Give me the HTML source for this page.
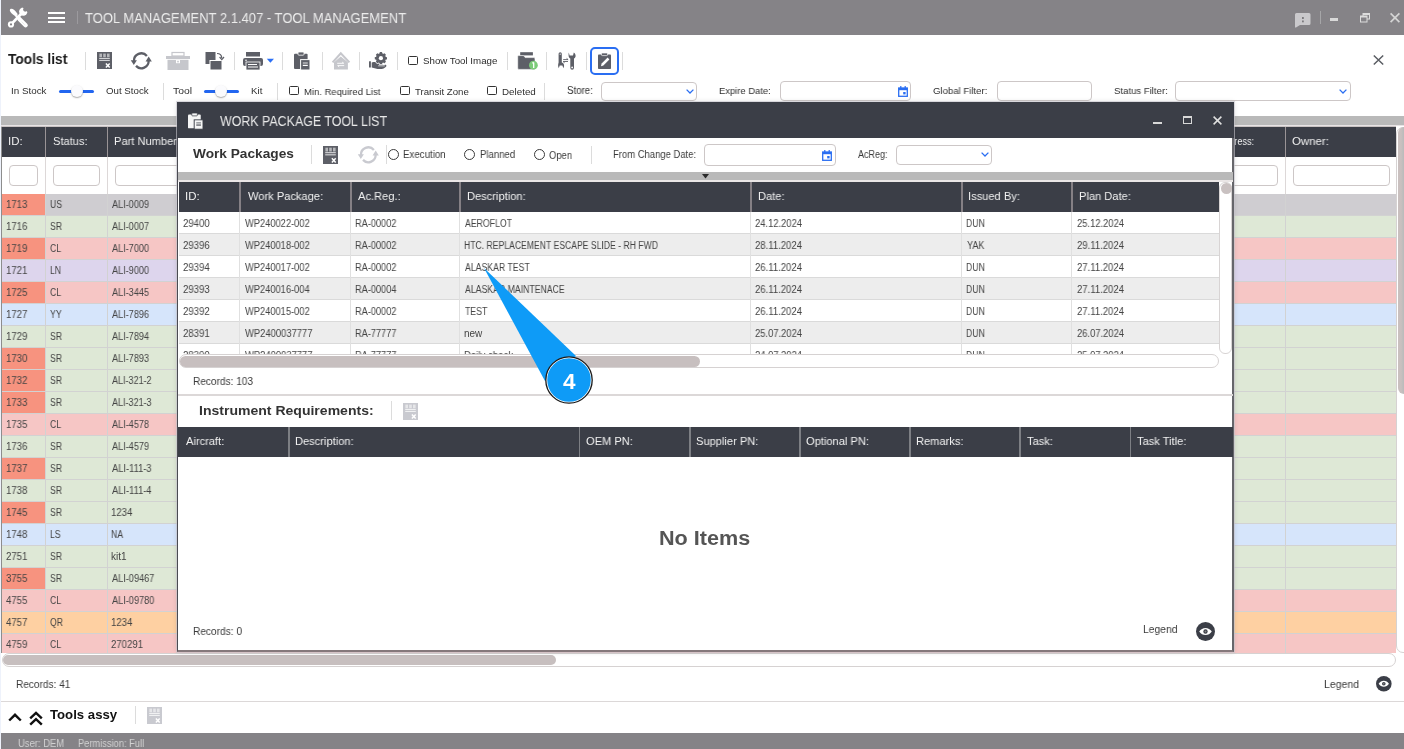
<!DOCTYPE html><html><head><meta charset="utf-8"><style>
*{margin:0;padding:0;box-sizing:border-box}
html,body{width:1404px;height:749px;overflow:hidden;background:#fff;font-family:"Liberation Sans",sans-serif}
.t{position:absolute;white-space:nowrap;line-height:1;will-change:transform}
.a{position:absolute}
svg{position:absolute;overflow:visible}
</style></head><body>
<div style="position:absolute;left:0px;top:0px;width:1px;height:749px;background:#eef2fb"></div>
<div style="position:absolute;left:1px;top:0px;width:1403px;height:35px;background:#858387"></div>
<svg style="left:0;top:0" width="34" height="34" viewBox="0 0 34 34">
<path d="M10.2 9.2 C11.8 7.9 14.6 9.6 17.8 14.2 L15.6 16.4 C11 13.2 8.9 10.6 10.2 9.2 Z" fill="#fff"/>
<path d="M16 15.6 L19.5 19.1" stroke="#fff" stroke-width="2.2"/>
<path d="M19.6 19.2 L25.6 25.2" stroke="#fff" stroke-width="4.4" stroke-linecap="round"/>
<path d="M21.6 21.6 L24.6 24.6" stroke="#e4e4e4" stroke-width="0.8"/>
<path d="M21.5 13.5 L11.8 23.6" stroke="#fff" stroke-width="2.8"/>
<circle cx="11" cy="24.4" r="3.1" fill="#fff"/>
<circle cx="11" cy="24.4" r="1.1" fill="#858387"/>
<circle cx="23.3" cy="11.6" r="4.2" fill="#fff"/>
<circle cx="25.2" cy="9.6" r="2.1" fill="#858387"/>
<path d="M25.2 9.6 L29 5.8 L24.6 5 L22.5 7.3 Z" fill="#858387"/>
<path d="M25.2 9.6 L29 5.8 L30 10 L27.5 12.2 Z" fill="#858387"/>
</svg>
<div style="position:absolute;left:48px;top:12px;width:17px;height:2px;background:#fff"></div>
<div style="position:absolute;left:48px;top:17px;width:17px;height:2px;background:#fff"></div>
<div style="position:absolute;left:48px;top:21px;width:17px;height:2px;background:#fff"></div>
<div style="position:absolute;left:77px;top:11px;width:1px;height:13px;background:#9c9a9e"></div>
<div class="t" style="left:84.77px;top:10.75px;font-size:14.000px;color:#ececec;font-weight:400;transform:scaleX(0.9289);transform-origin:0 0;">TOOL MANAGEMENT 2.1.407 - TOOL MANAGEMENT</div>
<svg style="left:1295px;top:13px" width="16" height="15" viewBox="0 0 16 15">
<path d="M1.5 0 H14 A1.5 1.5 0 0 1 15.5 1.5 V10.5 A1.5 1.5 0 0 1 14 12 H5 L1 14.5 L0 14.5 V1.5 A1.5 1.5 0 0 1 1.5 0Z" fill="#cac9cc"/>
<rect x="7" y="4" width="1.8" height="2" fill="#7c7a7e"/><rect x="7" y="7.5" width="1.8" height="1.8" fill="#7c7a7e"/>
</svg>
<div style="position:absolute;left:1319.5px;top:10.6px;width:1px;height:13.2px;background:#a6a6a8"></div>
<div style="position:absolute;left:1330.2px;top:18.2px;width:8.1px;height:2.8px;background:#d9d9d9"></div>
<svg style="left:1360px;top:13px" width="10" height="10" viewBox="0 0 10 10">
<rect x="3" y="0.5" width="6.5" height="5.5" fill="none" stroke="#dcdcdc" stroke-width="1"/>
<rect x="0.5" y="3" width="6.5" height="6" fill="#858387" stroke="#dcdcdc" stroke-width="1"/>
<rect x="0.5" y="3" width="6.5" height="1.5" fill="#dcdcdc"/><rect x="3" y="0.5" width="6.5" height="1.5" fill="#dcdcdc"/>
</svg>
<svg style="left:1390px;top:13px" width="10" height="10" viewBox="0 0 10 10">
<path d="M0.6 0.4 L9.4 9.2 M9.4 0.4 L0.6 9.2" stroke="#d4d4d4" stroke-width="1.7"/></svg>
<div class="t" style="left:7.86px;top:52.29px;font-size:14.069px;color:#1b1b1b;font-weight:700;transform:scaleX(0.9775);transform-origin:0 0;">Tools list</div>
<div style="position:absolute;left:85px;top:52px;width:1px;height:18px;background:#dcdcdc"></div>
<div style="position:absolute;left:234px;top:52px;width:1px;height:18px;background:#dcdcdc"></div>
<div style="position:absolute;left:282px;top:52px;width:1px;height:18px;background:#dcdcdc"></div>
<div style="position:absolute;left:322px;top:52px;width:1px;height:18px;background:#dcdcdc"></div>
<div style="position:absolute;left:359px;top:52px;width:1px;height:18px;background:#dcdcdc"></div>
<div style="position:absolute;left:397px;top:52px;width:1px;height:18px;background:#dcdcdc"></div>
<div style="position:absolute;left:507px;top:52px;width:1px;height:18px;background:#dcdcdc"></div>
<div style="position:absolute;left:546px;top:52px;width:1px;height:18px;background:#dcdcdc"></div>
<div style="position:absolute;left:586px;top:52px;width:1px;height:18px;background:#dcdcdc"></div>
<div style="position:absolute;left:622px;top:52px;width:1px;height:18px;background:#dcdcdc"></div>
<svg style="left:97px;top:52px" width="15" height="17" viewBox="0 0 15 17" preserveAspectRatio="none">
<rect x="0" y="0" width="15" height="17" fill="#5d5f67"/>
<g fill="#fff" opacity="0.55"><rect x="2.4" y="1.6" width="2.6" height="3.6"/><rect x="6.2" y="1.6" width="2.6" height="3.6"/><rect x="10" y="1.6" width="2.6" height="3.6"/></g>
<g fill="#fff" opacity="0.9"><rect x="2.2" y="5.9" width="10.6" height="0.9"/><rect x="2.2" y="7.9" width="10.6" height="0.9"/></g>
<path d="M8.9 11.6 L12.7 15.6 M12.7 11.6 L8.9 15.6" stroke="#fff" stroke-width="1.5"/>
</svg>
<svg style="left:131px;top:52px" width="20" height="18" viewBox="0 0 20 18">
<path d="M3 9.2 A7.3 7.3 0 0 1 15.9 4" fill="none" stroke="#5d5f67" stroke-width="2.3"/>
<path d="M17.6 8.4 A7.3 7.3 0 0 1 5 13.9" fill="none" stroke="#5d5f67" stroke-width="2.3"/>
<path d="M14.6 9.4 L20.8 9.4 L17.7 4.6 Z" fill="#5d5f67"/>
<path d="M-0.2 8.3 L5.9 8.3 L2.8 13 Z" fill="#5d5f67"/>
</svg>
<svg style="left:166px;top:52px" width="24" height="18" viewBox="0 0 24 18">
<rect x="6" y="0.5" width="12" height="3.5" fill="none" stroke="#c6c7cc" stroke-width="1.2"/>
<rect x="0" y="4" width="24" height="3" fill="#c6c7cc"/>
<rect x="1.5" y="7.8" width="21" height="10.2" fill="#c6c7cc"/>
<rect x="10" y="8" width="4" height="3.2" fill="#fff"/><rect x="11.2" y="8.8" width="1.6" height="1.6" fill="#c6c7cc"/>
</svg>
<svg style="left:205px;top:52px" width="20" height="18" viewBox="0 0 20 18">
<rect x="0.5" y="0" width="10" height="12" fill="#5d5f67"/>
<rect x="5" y="8.5" width="12" height="9.5" fill="#5d5f67" stroke="#fff" stroke-width="1"/>
<path d="M12 1.5 Q16.5 1.5 16.8 6" fill="none" stroke="#5d5f67" stroke-width="1.2"/>
<path d="M14.6 5 L16.8 7.6 L19 5" fill="none" stroke="#5d5f67" stroke-width="1.2"/>
</svg>
<svg style="left:243px;top:52px" width="32" height="18" viewBox="0 0 32 18">
<rect x="3" y="0" width="14" height="4.5" fill="#5d5f67"/>
<rect x="0" y="6" width="20" height="8" rx="2" fill="#5d5f67"/>
<rect x="3" y="10" width="14" height="8" fill="#5d5f67" stroke="#fff" stroke-width="0.8"/>
<rect x="5" y="12" width="9" height="1" fill="#fff"/><rect x="5" y="14.5" width="10" height="1" fill="#fff"/>
<circle cx="3" cy="8.3" r="0.8" fill="#fff"/>
<path d="M23.8 6.8 L31 6.8 L27.4 10.8 Z" fill="#2b6ff5"/>
</svg>
<svg style="left:294px;top:52px" width="16" height="18" viewBox="0 0 16 18" preserveAspectRatio="none">
<rect x="0" y="1.8" width="13.6" height="15.2" rx="1" fill="#5d5f67"/>
<rect x="4" y="0" width="6" height="3.2" rx="0.9" fill="#5d5f67" stroke="#fff" stroke-width="0.8"/>
<rect x="6.6" y="7.6" width="9.4" height="10.4" fill="#5d5f67" stroke="#fff" stroke-width="1"/>
<rect x="8.8" y="10.4" width="5" height="1.2" fill="#fff" opacity="0.7"/><rect x="8.8" y="12.8" width="5" height="1.2" fill="#fff"/>
</svg>
<svg style="left:328px;top:48px" width="64" height="26" viewBox="328 48 64 26">
<path d="M332.6 62.4 L340.8 53.3 L349.4 62.4" fill="none" stroke="#c6c7cc" stroke-width="2.1" stroke-linejoin="miter"/>
<path d="M334 62.2 L340.8 56.4 L347.9 62.2 V69.4 H334 Z" fill="#c6c7cc"/>
<path d="M337.2 63.3 H343.6 M342.2 62.1 L343.8 63.3 M344.2 65.6 H337.8 M339.2 66.8 L337.6 65.6" stroke="#fff" stroke-width="0.9" fill="none"/>
<rect x="369" y="61.2" width="1.9" height="6.4" rx="0.3" fill="#5d5f67"/>
<path d="M371.7 62.4 C374 61.8 377.5 61.9 380 62.4 L382.2 62.8 C383.4 63.1 383.4 64.6 382 64.7 L378.5 64.8 L384.6 64.9 C385.8 64.6 386.9 65.4 386.2 66.4 C385 68 382.4 69.2 379.4 69.1 C377 69 374.2 68.1 371.7 67.5 Z" fill="#5d5f67"/>
<path d="M378.2 65.8 L384.8 65.9" stroke="#fff" stroke-width="0.7"/>
<g transform="translate(380.9,58.2)" fill="#fff" stroke="#fff" stroke-width="1.4"><rect x="-1.3" y="-6.1" width="2.6" height="2.6" rx="0.6" transform="rotate(0)"/><rect x="-1.3" y="-6.1" width="2.6" height="2.6" rx="0.6" transform="rotate(45)"/><rect x="-1.3" y="-6.1" width="2.6" height="2.6" rx="0.6" transform="rotate(90)"/><rect x="-1.3" y="-6.1" width="2.6" height="2.6" rx="0.6" transform="rotate(135)"/><rect x="-1.3" y="-6.1" width="2.6" height="2.6" rx="0.6" transform="rotate(180)"/><rect x="-1.3" y="-6.1" width="2.6" height="2.6" rx="0.6" transform="rotate(225)"/><rect x="-1.3" y="-6.1" width="2.6" height="2.6" rx="0.6" transform="rotate(270)"/><rect x="-1.3" y="-6.1" width="2.6" height="2.6" rx="0.6" transform="rotate(315)"/><circle r="5"/></g>
<g transform="translate(380.9,58.2)" fill="#5d5f67"><rect x="-1.3" y="-6.1" width="2.6" height="2.6" rx="0.6" transform="rotate(0)"/><rect x="-1.3" y="-6.1" width="2.6" height="2.6" rx="0.6" transform="rotate(45)"/><rect x="-1.3" y="-6.1" width="2.6" height="2.6" rx="0.6" transform="rotate(90)"/><rect x="-1.3" y="-6.1" width="2.6" height="2.6" rx="0.6" transform="rotate(135)"/><rect x="-1.3" y="-6.1" width="2.6" height="2.6" rx="0.6" transform="rotate(180)"/><rect x="-1.3" y="-6.1" width="2.6" height="2.6" rx="0.6" transform="rotate(225)"/><rect x="-1.3" y="-6.1" width="2.6" height="2.6" rx="0.6" transform="rotate(270)"/><rect x="-1.3" y="-6.1" width="2.6" height="2.6" rx="0.6" transform="rotate(315)"/><circle r="5"/></g>
<circle cx="380.9" cy="58.2" r="2.1" fill="#fff"/>
</svg>
<div class="a" style="left:408px;top:56px;width:10px;height:9px;border:1.5px solid #333;border-radius:1.5px"></div>
<div class="t" style="left:423.16px;top:55.84px;font-size:9.517px;color:#2b2b2b;font-weight:400;transform:scaleX(1.0229);transform-origin:0 0;">Show Tool Image</div>
<svg style="left:515px;top:50px" width="65" height="22" viewBox="515 50 65 22">
<rect x="520.2" y="52.2" width="12.7" height="3.2" fill="#5d5f67"/>
<path d="M518.6 55.6 H523.6 L525.2 57.6 H533.8 A1.2 1.2 0 0 1 535 58.8 V68.2 A1.2 1.2 0 0 1 533.8 69.4 H518.9 A1.2 1.2 0 0 1 517.7 68.2 V56.6 A1 1 0 0 1 518.6 55.6 Z" fill="#5d5f67" stroke="#fff" stroke-width="0.6"/>
<circle cx="533.4" cy="65.2" r="4.4" fill="#7ccb79"/>
<path d="M533.7 62.4 V68 M532.4 63.3 L533.7 62.4" stroke="#fff" stroke-width="1.3" fill="none"/>
<path d="M560.2 52.2 A1.6 1.6 0 0 1 561.8 53.8 V62.4 C563.6 62.9 564.4 64.6 564 66.6 L563.4 68.3 L562.4 65.6 H559.7 L558.8 68.3 L558.2 66.6 C557.8 64.6 558.6 62.9 558.6 62.4 V53.8 A1.6 1.6 0 0 1 560.2 52.2 Z" fill="#5d5f67"/>
<circle cx="560.2" cy="54.2" r="0.6" fill="#fff"/>
<path d="M568.8 52.6 L569.6 55.6 H573 L573.8 52.6 C575.6 53.8 576.2 56.2 575 57.8 C574.6 58.3 574.2 58.4 574 58.6 V67.8 A1.85 1.85 0 0 1 570.3 67.8 V58.6 C570 58.4 569.6 58.3 569.3 57.8 C568.2 56.2 568.6 53.8 568.8 52.6 Z" fill="#5d5f67"/>
<circle cx="572.15" cy="67.4" r="0.9" fill="#fff"/>
<path d="M563.2 59.6 H568 M566.6 58.4 L568.2 59.6 M568 61.5 H563.2 M564.6 62.7 L563 61.5" stroke="#5d5f67" stroke-width="0.9" fill="none"/>
</svg>
<div class="a" style="left:589.5px;top:47px;width:29.5px;height:27.5px;border:2px solid #2a6ef2;border-radius:5px"></div>
<svg style="left:598px;top:53px" width="13" height="16" viewBox="0 0 13 16">
<rect x="0" y="1.5" width="13" height="14.5" rx="0.8" fill="#5d5f67"/>
<rect x="3.5" y="0" width="6" height="2.6" rx="0.8" fill="#5d5f67" stroke="#fff" stroke-width="0.7"/>
<path d="M3 13.2 L3.6 10.6 L9.6 4.6 L11.4 6.4 L5.4 12.4 Z" fill="#fff"/>
</svg>
<svg style="left:1373px;top:55px" width="11" height="10" viewBox="0 0 11 10">
<path d="M0.8 0.5 L10.2 9.5 M10.2 0.5 L0.8 9.5" stroke="#5a5d63" stroke-width="1.5"/></svg>
<div class="t" style="left:11.11px;top:85.83px;font-size:9.655px;color:#2f2f2f;font-weight:400;transform:scaleX(1.0196);transform-origin:0 0;">In Stock</div>
<div style="position:absolute;left:59px;top:89.5px;width:35px;height:3px;background:#2266f0;border-radius:1.5px"></div><div class="a" style="left:70.5px;top:85px;width:12px;height:12px;border-radius:6px;background:#fbfbfd;box-shadow:0 1px 1.5px rgba(0,0,0,0.35)"></div>
<div class="t" style="left:106.16px;top:85.83px;font-size:9.655px;color:#2f2f2f;font-weight:400;transform:scaleX(1.0083);transform-origin:0 0;">Out Stock</div>
<div style="position:absolute;left:163px;top:82.5px;width:1px;height:17.5px;background:#dcdcdc"></div>
<div class="t" style="left:172.74px;top:85.83px;font-size:9.655px;color:#2f2f2f;font-weight:400;transform:scaleX(1.0714);transform-origin:0 0;">Tool</div>
<div style="position:absolute;left:204px;top:89.5px;width:34.5px;height:3px;background:#2266f0;border-radius:1.5px"></div><div class="a" style="left:215px;top:85px;width:12px;height:12px;border-radius:6px;background:#fbfbfd;box-shadow:0 1px 1.5px rgba(0,0,0,0.35)"></div>
<div class="t" style="left:250.72px;top:85.83px;font-size:9.655px;color:#2f2f2f;font-weight:400;transform:scaleX(1.0069);transform-origin:0 0;">Kit</div>
<div style="position:absolute;left:277px;top:82.5px;width:1px;height:17.5px;background:#dcdcdc"></div>
<div class="a" style="left:288.5px;top:86.3px;width:10px;height:9px;border:1.5px solid #333;border-radius:1.5px"></div>
<div class="t" style="left:303.64px;top:86.83px;font-size:9.655px;color:#2f2f2f;font-weight:400;transform:scaleX(0.9824);transform-origin:0 0;">Min. Required List</div>
<div class="a" style="left:399.7px;top:86.3px;width:10px;height:9px;border:1.5px solid #333;border-radius:1.5px"></div>
<div class="t" style="left:414.76px;top:86.83px;font-size:9.655px;color:#2f2f2f;font-weight:400;transform:scaleX(0.9915);transform-origin:0 0;">Transit Zone</div>
<div class="a" style="left:487px;top:86.3px;width:10px;height:9px;border:1.5px solid #333;border-radius:1.5px"></div>
<div class="t" style="left:501.81px;top:86.83px;font-size:9.655px;color:#2f2f2f;font-weight:400;transform:scaleX(1.0169);transform-origin:0 0;">Deleted</div>
<div style="position:absolute;left:544px;top:82.5px;width:1px;height:17.5px;background:#dcdcdc"></div>
<div class="t" style="left:566.86px;top:85.63px;font-size:10.000px;color:#2f2f2f;font-weight:400;transform:scaleX(0.9684);transform-origin:0 0;">Store:</div>
<div class="a" style="left:601px;top:81.5px;width:96px;height:19px;border:1px solid #cdc7c7;border-radius:4px;background:#fff"></div>
<svg style="left:686px;top:88.5px" width="8" height="5" viewBox="0 0 8 5"><path d="M0.6 0.6 L4 4 L7.4 0.6" fill="none" stroke="#2a6ef2" stroke-width="1.3"/></svg>
<div class="t" style="left:719.15px;top:85.61px;font-size:9.793px;color:#2f2f2f;font-weight:400;transform:scaleX(0.9617);transform-origin:0 0;">Expire Date:</div>
<div class="a" style="left:779.5px;top:80.5px;width:131.5px;height:20.5px;border:1px solid #cdc7c7;border-radius:4px;background:#fff"></div>
<svg style="left:898px;top:86px" width="10" height="11" viewBox="0 0 10 11">
<rect x="0.7" y="2" width="8.6" height="8.3" fill="none" stroke="#2a6ef2" stroke-width="1.3"/>
<rect x="0.7" y="2" width="8.6" height="2.2" fill="#2a6ef2"/>
<rect x="2.2" y="0" width="1.2" height="2.2" fill="#2a6ef2"/><rect x="6.6" y="0" width="1.2" height="2.2" fill="#2a6ef2"/>
<rect x="5.2" y="6" width="2.4" height="2.4" fill="#2a6ef2"/></svg>
<div class="t" style="left:932.82px;top:85.61px;font-size:9.793px;color:#2f2f2f;font-weight:400;transform:scaleX(0.9795);transform-origin:0 0;">Global Filter:</div>
<div class="a" style="left:996.5px;top:80.5px;width:95.5px;height:20.5px;border:1px solid #cdc7c7;border-radius:4px;background:#fff"></div>
<div class="t" style="left:1114.07px;top:85.61px;font-size:9.793px;color:#2f2f2f;font-weight:400;transform:scaleX(0.9792);transform-origin:0 0;">Status Filter:</div>
<div class="a" style="left:1174.5px;top:81px;width:176px;height:20px;border:1px solid #cdc7c7;border-radius:4px;background:#fff"></div>
<svg style="left:1339px;top:88.5px" width="8" height="5" viewBox="0 0 8 5"><path d="M0.6 0.6 L4 4 L7.4 0.6" fill="none" stroke="#2a6ef2" stroke-width="1.3"/></svg>
<div style="position:absolute;left:1px;top:116px;width:1403px;height:9px;background:#b9b9b9"></div>
<div style="position:absolute;left:1px;top:125px;width:1403px;height:1px;background:#e7e3e5"></div>
<div style="position:absolute;left:1px;top:126px;width:1395px;height:1px;background:#c9c3c3"></div>
<div style="position:absolute;left:1px;top:127px;width:1395px;height:30px;background:#3b3e47"></div>
<div style="position:absolute;left:1px;top:127px;width:1px;height:526px;background:#8d8d8d"></div>
<div style="position:absolute;left:45px;top:127px;width:1.2px;height:30px;background:#9a9496"></div>
<div style="position:absolute;left:107px;top:127px;width:1.2px;height:30px;background:#9a9496"></div>
<div style="position:absolute;left:1285px;top:127px;width:1.2px;height:30px;background:#9a9496"></div>
<div class="t" style="left:7.50px;top:135.51px;font-size:11.448px;color:#f0f0f0;font-weight:400;transform:scaleX(0.9711);transform-origin:0 0;">ID:</div>
<div class="t" style="left:52.60px;top:135.51px;font-size:11.448px;color:#f0f0f0;font-weight:400;transform:scaleX(0.9711);transform-origin:0 0;">Status:</div>
<div class="t" style="left:113.91px;top:135.51px;font-size:11.448px;color:#f0f0f0;font-weight:400;transform:scaleX(0.9711);transform-origin:0 0;">Part Number:</div>
<div class="t" style="left:1217.99px;top:135.51px;font-size:11.448px;color:#f0f0f0;font-weight:400;transform:scaleX(0.8000);transform-origin:0 0;">Address:</div>
<div class="t" style="left:1292.18px;top:135.28px;font-size:11.714px;color:#f0f0f0;font-weight:400;transform:scaleX(0.9796);transform-origin:0 0;">Owner:</div>
<div style="position:absolute;left:2px;top:157px;width:1394px;height:37px;background:#fff"></div>
<div style="position:absolute;left:45px;top:157px;width:1px;height:37px;background:#ddd8d8"></div>
<div style="position:absolute;left:107px;top:157px;width:1px;height:37px;background:#ddd8d8"></div>
<div style="position:absolute;left:1285px;top:157px;width:1px;height:37px;background:#ddd8d8"></div>
<div class="a" style="left:9px;top:164.5px;width:29px;height:21.5px;border:1px solid #cdc7c7;border-radius:4px;background:#fff"></div>
<div class="a" style="left:53px;top:164.5px;width:46.5px;height:21.5px;border:1px solid #cdc7c7;border-radius:4px;background:#fff"></div>
<div class="a" style="left:115px;top:164.5px;width:200px;height:21.5px;border:1px solid #cdc7c7;border-radius:4px;background:#fff"></div>
<div class="a" style="left:1200px;top:164.5px;width:78px;height:21.5px;border:1px solid #cdc7c7;border-radius:4px;background:#fff"></div>
<div class="a" style="left:1292.5px;top:164.5px;width:97px;height:21.5px;border:1px solid #cdc7c7;border-radius:4px;background:#fff"></div>
<div style="position:absolute;left:2px;top:194px;width:43px;height:21px;background:#f7937f"></div>
<div style="position:absolute;left:45px;top:194px;width:1351px;height:21px;background:#cfcdd1"></div>
<div style="position:absolute;left:2px;top:215px;width:1394px;height:1px;background:#d2d2d2"></div>
<div style="position:absolute;left:45px;top:194px;width:1px;height:21px;background:#d2d2d2"></div>
<div style="position:absolute;left:107px;top:194px;width:1px;height:21px;background:#d2d2d2"></div>
<div style="position:absolute;left:1285px;top:194px;width:1px;height:21px;background:#d2d2d2"></div>
<div class="t" style="left:5.98px;top:200.03px;font-size:10.000px;color:#444;font-weight:400;transform:scaleX(0.9616);transform-origin:0 0;">1713</div>
<div class="t" style="left:50.05px;top:200.03px;font-size:10.000px;color:#444;font-weight:400;transform:scaleX(0.8679);transform-origin:0 0;">US</div>
<div class="t" style="left:111.75px;top:200.03px;font-size:10.000px;color:#444;font-weight:400;transform:scaleX(0.9118);transform-origin:0 0;">ALI-0009</div>
<div style="position:absolute;left:2px;top:216px;width:43px;height:21px;background:#dee8d6"></div>
<div style="position:absolute;left:45px;top:216px;width:1351px;height:21px;background:#dee8d6"></div>
<div style="position:absolute;left:2px;top:237px;width:1394px;height:1px;background:#d2d2d2"></div>
<div style="position:absolute;left:45px;top:216px;width:1px;height:21px;background:#d2d2d2"></div>
<div style="position:absolute;left:107px;top:216px;width:1px;height:21px;background:#d2d2d2"></div>
<div style="position:absolute;left:1285px;top:216px;width:1px;height:21px;background:#d2d2d2"></div>
<div class="t" style="left:5.98px;top:222.03px;font-size:10.000px;color:#444;font-weight:400;transform:scaleX(0.9616);transform-origin:0 0;">1716</div>
<div class="t" style="left:50.31px;top:222.03px;font-size:10.000px;color:#444;font-weight:400;transform:scaleX(0.8693);transform-origin:0 0;">SR</div>
<div class="t" style="left:111.75px;top:222.03px;font-size:10.000px;color:#444;font-weight:400;transform:scaleX(0.9118);transform-origin:0 0;">ALI-0007</div>
<div style="position:absolute;left:2px;top:238px;width:43px;height:21px;background:#f7937f"></div>
<div style="position:absolute;left:45px;top:238px;width:1351px;height:21px;background:#f6c6c5"></div>
<div style="position:absolute;left:2px;top:259px;width:1394px;height:1px;background:#d2d2d2"></div>
<div style="position:absolute;left:45px;top:238px;width:1px;height:21px;background:#d2d2d2"></div>
<div style="position:absolute;left:107px;top:238px;width:1px;height:21px;background:#d2d2d2"></div>
<div style="position:absolute;left:1285px;top:238px;width:1px;height:21px;background:#d2d2d2"></div>
<div class="t" style="left:5.98px;top:244.03px;font-size:10.000px;color:#444;font-weight:400;transform:scaleX(0.9616);transform-origin:0 0;">1719</div>
<div class="t" style="left:50.27px;top:244.03px;font-size:10.000px;color:#444;font-weight:400;transform:scaleX(0.8695);transform-origin:0 0;">CL</div>
<div class="t" style="left:111.75px;top:244.03px;font-size:10.000px;color:#444;font-weight:400;transform:scaleX(0.9118);transform-origin:0 0;">ALI-7000</div>
<div style="position:absolute;left:2px;top:260px;width:43px;height:21px;background:#ddd5ed"></div>
<div style="position:absolute;left:45px;top:260px;width:1351px;height:21px;background:#ddd5ed"></div>
<div style="position:absolute;left:2px;top:281px;width:1394px;height:1px;background:#d2d2d2"></div>
<div style="position:absolute;left:45px;top:260px;width:1px;height:21px;background:#d2d2d2"></div>
<div style="position:absolute;left:107px;top:260px;width:1px;height:21px;background:#d2d2d2"></div>
<div style="position:absolute;left:1285px;top:260px;width:1px;height:21px;background:#d2d2d2"></div>
<div class="t" style="left:5.98px;top:266.04px;font-size:10.000px;color:#444;font-weight:400;transform:scaleX(0.9617);transform-origin:0 0;">1721</div>
<div class="t" style="left:50.01px;top:266.04px;font-size:10.000px;color:#444;font-weight:400;transform:scaleX(0.8651);transform-origin:0 0;">LN</div>
<div class="t" style="left:111.75px;top:266.04px;font-size:10.000px;color:#444;font-weight:400;transform:scaleX(0.9118);transform-origin:0 0;">ALI-9000</div>
<div style="position:absolute;left:2px;top:282px;width:43px;height:21px;background:#f7937f"></div>
<div style="position:absolute;left:45px;top:282px;width:1351px;height:21px;background:#f6c6c5"></div>
<div style="position:absolute;left:2px;top:303px;width:1394px;height:1px;background:#d2d2d2"></div>
<div style="position:absolute;left:45px;top:282px;width:1px;height:21px;background:#d2d2d2"></div>
<div style="position:absolute;left:107px;top:282px;width:1px;height:21px;background:#d2d2d2"></div>
<div style="position:absolute;left:1285px;top:282px;width:1px;height:21px;background:#d2d2d2"></div>
<div class="t" style="left:5.98px;top:288.04px;font-size:10.000px;color:#444;font-weight:400;transform:scaleX(0.9616);transform-origin:0 0;">1725</div>
<div class="t" style="left:50.27px;top:288.04px;font-size:10.000px;color:#444;font-weight:400;transform:scaleX(0.8695);transform-origin:0 0;">CL</div>
<div class="t" style="left:111.75px;top:288.04px;font-size:10.000px;color:#444;font-weight:400;transform:scaleX(0.9118);transform-origin:0 0;">ALI-3445</div>
<div style="position:absolute;left:2px;top:304px;width:43px;height:21px;background:#d6e5fb"></div>
<div style="position:absolute;left:45px;top:304px;width:1351px;height:21px;background:#d6e5fb"></div>
<div style="position:absolute;left:2px;top:325px;width:1394px;height:1px;background:#d2d2d2"></div>
<div style="position:absolute;left:45px;top:304px;width:1px;height:21px;background:#d2d2d2"></div>
<div style="position:absolute;left:107px;top:304px;width:1px;height:21px;background:#d2d2d2"></div>
<div style="position:absolute;left:1285px;top:304px;width:1px;height:21px;background:#d2d2d2"></div>
<div class="t" style="left:5.98px;top:310.04px;font-size:10.000px;color:#444;font-weight:400;transform:scaleX(0.9617);transform-origin:0 0;">1727</div>
<div class="t" style="left:50.48px;top:310.04px;font-size:10.000px;color:#444;font-weight:400;transform:scaleX(0.8712);transform-origin:0 0;">YY</div>
<div class="t" style="left:111.75px;top:310.04px;font-size:10.000px;color:#444;font-weight:400;transform:scaleX(0.9118);transform-origin:0 0;">ALI-7896</div>
<div style="position:absolute;left:2px;top:326px;width:43px;height:21px;background:#dee8d6"></div>
<div style="position:absolute;left:45px;top:326px;width:1351px;height:21px;background:#dee8d6"></div>
<div style="position:absolute;left:2px;top:347px;width:1394px;height:1px;background:#d2d2d2"></div>
<div style="position:absolute;left:45px;top:326px;width:1px;height:21px;background:#d2d2d2"></div>
<div style="position:absolute;left:107px;top:326px;width:1px;height:21px;background:#d2d2d2"></div>
<div style="position:absolute;left:1285px;top:326px;width:1px;height:21px;background:#d2d2d2"></div>
<div class="t" style="left:5.98px;top:332.04px;font-size:10.000px;color:#444;font-weight:400;transform:scaleX(0.9616);transform-origin:0 0;">1729</div>
<div class="t" style="left:50.31px;top:332.04px;font-size:10.000px;color:#444;font-weight:400;transform:scaleX(0.8693);transform-origin:0 0;">SR</div>
<div class="t" style="left:111.75px;top:332.04px;font-size:10.000px;color:#444;font-weight:400;transform:scaleX(0.9119);transform-origin:0 0;">ALI-7894</div>
<div style="position:absolute;left:2px;top:348px;width:43px;height:21px;background:#f7937f"></div>
<div style="position:absolute;left:45px;top:348px;width:1351px;height:21px;background:#dee8d6"></div>
<div style="position:absolute;left:2px;top:369px;width:1394px;height:1px;background:#d2d2d2"></div>
<div style="position:absolute;left:45px;top:348px;width:1px;height:21px;background:#d2d2d2"></div>
<div style="position:absolute;left:107px;top:348px;width:1px;height:21px;background:#d2d2d2"></div>
<div style="position:absolute;left:1285px;top:348px;width:1px;height:21px;background:#d2d2d2"></div>
<div class="t" style="left:5.98px;top:354.04px;font-size:10.000px;color:#444;font-weight:400;transform:scaleX(0.9616);transform-origin:0 0;">1730</div>
<div class="t" style="left:50.31px;top:354.04px;font-size:10.000px;color:#444;font-weight:400;transform:scaleX(0.8693);transform-origin:0 0;">SR</div>
<div class="t" style="left:111.75px;top:354.04px;font-size:10.000px;color:#444;font-weight:400;transform:scaleX(0.9118);transform-origin:0 0;">ALI-7893</div>
<div style="position:absolute;left:2px;top:370px;width:43px;height:21px;background:#f7937f"></div>
<div style="position:absolute;left:45px;top:370px;width:1351px;height:21px;background:#dee8d6"></div>
<div style="position:absolute;left:2px;top:391px;width:1394px;height:1px;background:#d2d2d2"></div>
<div style="position:absolute;left:45px;top:370px;width:1px;height:21px;background:#d2d2d2"></div>
<div style="position:absolute;left:107px;top:370px;width:1px;height:21px;background:#d2d2d2"></div>
<div style="position:absolute;left:1285px;top:370px;width:1px;height:21px;background:#d2d2d2"></div>
<div class="t" style="left:5.98px;top:376.04px;font-size:10.000px;color:#444;font-weight:400;transform:scaleX(0.9617);transform-origin:0 0;">1732</div>
<div class="t" style="left:50.31px;top:376.04px;font-size:10.000px;color:#444;font-weight:400;transform:scaleX(0.8693);transform-origin:0 0;">SR</div>
<div class="t" style="left:111.75px;top:376.04px;font-size:10.000px;color:#444;font-weight:400;transform:scaleX(0.9005);transform-origin:0 0;">ALI-321-2</div>
<div style="position:absolute;left:2px;top:392px;width:43px;height:21px;background:#f7937f"></div>
<div style="position:absolute;left:45px;top:392px;width:1351px;height:21px;background:#dee8d6"></div>
<div style="position:absolute;left:2px;top:413px;width:1394px;height:1px;background:#d2d2d2"></div>
<div style="position:absolute;left:45px;top:392px;width:1px;height:21px;background:#d2d2d2"></div>
<div style="position:absolute;left:107px;top:392px;width:1px;height:21px;background:#d2d2d2"></div>
<div style="position:absolute;left:1285px;top:392px;width:1px;height:21px;background:#d2d2d2"></div>
<div class="t" style="left:5.98px;top:398.04px;font-size:10.000px;color:#444;font-weight:400;transform:scaleX(0.9616);transform-origin:0 0;">1733</div>
<div class="t" style="left:50.31px;top:398.04px;font-size:10.000px;color:#444;font-weight:400;transform:scaleX(0.8693);transform-origin:0 0;">SR</div>
<div class="t" style="left:111.75px;top:398.04px;font-size:10.000px;color:#444;font-weight:400;transform:scaleX(0.9006);transform-origin:0 0;">ALI-321-3</div>
<div style="position:absolute;left:2px;top:414px;width:43px;height:21px;background:#f6c6c5"></div>
<div style="position:absolute;left:45px;top:414px;width:1351px;height:21px;background:#f6c6c5"></div>
<div style="position:absolute;left:2px;top:435px;width:1394px;height:1px;background:#d2d2d2"></div>
<div style="position:absolute;left:45px;top:414px;width:1px;height:21px;background:#d2d2d2"></div>
<div style="position:absolute;left:107px;top:414px;width:1px;height:21px;background:#d2d2d2"></div>
<div style="position:absolute;left:1285px;top:414px;width:1px;height:21px;background:#d2d2d2"></div>
<div class="t" style="left:5.98px;top:420.04px;font-size:10.000px;color:#444;font-weight:400;transform:scaleX(0.9616);transform-origin:0 0;">1735</div>
<div class="t" style="left:50.27px;top:420.04px;font-size:10.000px;color:#444;font-weight:400;transform:scaleX(0.8695);transform-origin:0 0;">CL</div>
<div class="t" style="left:111.75px;top:420.04px;font-size:10.000px;color:#444;font-weight:400;transform:scaleX(0.9118);transform-origin:0 0;">ALI-4578</div>
<div style="position:absolute;left:2px;top:436px;width:43px;height:21px;background:#dee8d6"></div>
<div style="position:absolute;left:45px;top:436px;width:1351px;height:21px;background:#dee8d6"></div>
<div style="position:absolute;left:2px;top:457px;width:1394px;height:1px;background:#d2d2d2"></div>
<div style="position:absolute;left:45px;top:436px;width:1px;height:21px;background:#d2d2d2"></div>
<div style="position:absolute;left:107px;top:436px;width:1px;height:21px;background:#d2d2d2"></div>
<div style="position:absolute;left:1285px;top:436px;width:1px;height:21px;background:#d2d2d2"></div>
<div class="t" style="left:5.98px;top:442.04px;font-size:10.000px;color:#444;font-weight:400;transform:scaleX(0.9616);transform-origin:0 0;">1736</div>
<div class="t" style="left:50.31px;top:442.04px;font-size:10.000px;color:#444;font-weight:400;transform:scaleX(0.8693);transform-origin:0 0;">SR</div>
<div class="t" style="left:111.75px;top:442.04px;font-size:10.000px;color:#444;font-weight:400;transform:scaleX(0.9118);transform-origin:0 0;">ALI-4579</div>
<div style="position:absolute;left:2px;top:458px;width:43px;height:21px;background:#f7937f"></div>
<div style="position:absolute;left:45px;top:458px;width:1351px;height:21px;background:#dee8d6"></div>
<div style="position:absolute;left:2px;top:479px;width:1394px;height:1px;background:#d2d2d2"></div>
<div style="position:absolute;left:45px;top:458px;width:1px;height:21px;background:#d2d2d2"></div>
<div style="position:absolute;left:107px;top:458px;width:1px;height:21px;background:#d2d2d2"></div>
<div style="position:absolute;left:1285px;top:458px;width:1px;height:21px;background:#d2d2d2"></div>
<div class="t" style="left:5.98px;top:464.04px;font-size:10.000px;color:#444;font-weight:400;transform:scaleX(0.9617);transform-origin:0 0;">1737</div>
<div class="t" style="left:50.31px;top:464.04px;font-size:10.000px;color:#444;font-weight:400;transform:scaleX(0.8693);transform-origin:0 0;">SR</div>
<div class="t" style="left:111.75px;top:464.04px;font-size:10.000px;color:#444;font-weight:400;transform:scaleX(0.9325);transform-origin:0 0;">ALI-111-3</div>
<div style="position:absolute;left:2px;top:480px;width:43px;height:21px;background:#dee8d6"></div>
<div style="position:absolute;left:45px;top:480px;width:1351px;height:21px;background:#dee8d6"></div>
<div style="position:absolute;left:2px;top:501px;width:1394px;height:1px;background:#d2d2d2"></div>
<div style="position:absolute;left:45px;top:480px;width:1px;height:21px;background:#d2d2d2"></div>
<div style="position:absolute;left:107px;top:480px;width:1px;height:21px;background:#d2d2d2"></div>
<div style="position:absolute;left:1285px;top:480px;width:1px;height:21px;background:#d2d2d2"></div>
<div class="t" style="left:5.98px;top:486.04px;font-size:10.000px;color:#444;font-weight:400;transform:scaleX(0.9616);transform-origin:0 0;">1738</div>
<div class="t" style="left:50.31px;top:486.04px;font-size:10.000px;color:#444;font-weight:400;transform:scaleX(0.8693);transform-origin:0 0;">SR</div>
<div class="t" style="left:111.75px;top:486.04px;font-size:10.000px;color:#444;font-weight:400;transform:scaleX(0.9325);transform-origin:0 0;">ALI-111-4</div>
<div style="position:absolute;left:2px;top:502px;width:43px;height:21px;background:#f7937f"></div>
<div style="position:absolute;left:45px;top:502px;width:1351px;height:21px;background:#dee8d6"></div>
<div style="position:absolute;left:2px;top:523px;width:1394px;height:1px;background:#d2d2d2"></div>
<div style="position:absolute;left:45px;top:502px;width:1px;height:21px;background:#d2d2d2"></div>
<div style="position:absolute;left:107px;top:502px;width:1px;height:21px;background:#d2d2d2"></div>
<div style="position:absolute;left:1285px;top:502px;width:1px;height:21px;background:#d2d2d2"></div>
<div class="t" style="left:5.98px;top:508.04px;font-size:10.000px;color:#444;font-weight:400;transform:scaleX(0.9616);transform-origin:0 0;">1745</div>
<div class="t" style="left:50.31px;top:508.04px;font-size:10.000px;color:#444;font-weight:400;transform:scaleX(0.8693);transform-origin:0 0;">SR</div>
<div class="t" style="left:111.08px;top:508.04px;font-size:10.000px;color:#444;font-weight:400;transform:scaleX(0.9614);transform-origin:0 0;">1234</div>
<div style="position:absolute;left:2px;top:524px;width:43px;height:21px;background:#d6e5fb"></div>
<div style="position:absolute;left:45px;top:524px;width:1351px;height:21px;background:#d6e5fb"></div>
<div style="position:absolute;left:2px;top:545px;width:1394px;height:1px;background:#d2d2d2"></div>
<div style="position:absolute;left:45px;top:524px;width:1px;height:21px;background:#d2d2d2"></div>
<div style="position:absolute;left:107px;top:524px;width:1px;height:21px;background:#d2d2d2"></div>
<div style="position:absolute;left:1285px;top:524px;width:1px;height:21px;background:#d2d2d2"></div>
<div class="t" style="left:5.98px;top:530.03px;font-size:10.000px;color:#444;font-weight:400;transform:scaleX(0.9616);transform-origin:0 0;">1748</div>
<div class="t" style="left:50.01px;top:530.03px;font-size:10.000px;color:#444;font-weight:400;transform:scaleX(0.8668);transform-origin:0 0;">LS</div>
<div class="t" style="left:111.10px;top:530.03px;font-size:10.000px;color:#444;font-weight:400;transform:scaleX(0.8698);transform-origin:0 0;">NA</div>
<div style="position:absolute;left:2px;top:546px;width:43px;height:21px;background:#dee8d6"></div>
<div style="position:absolute;left:45px;top:546px;width:1351px;height:21px;background:#dee8d6"></div>
<div style="position:absolute;left:2px;top:567px;width:1394px;height:1px;background:#d2d2d2"></div>
<div style="position:absolute;left:45px;top:546px;width:1px;height:21px;background:#d2d2d2"></div>
<div style="position:absolute;left:107px;top:546px;width:1px;height:21px;background:#d2d2d2"></div>
<div style="position:absolute;left:1285px;top:546px;width:1px;height:21px;background:#d2d2d2"></div>
<div class="t" style="left:6.22px;top:552.03px;font-size:10.000px;color:#444;font-weight:400;transform:scaleX(0.9613);transform-origin:0 0;">2751</div>
<div class="t" style="left:50.31px;top:552.03px;font-size:10.000px;color:#444;font-weight:400;transform:scaleX(0.8693);transform-origin:0 0;">SR</div>
<div class="t" style="left:111.16px;top:552.03px;font-size:10.000px;color:#444;font-weight:400;transform:scaleX(0.9809);transform-origin:0 0;">kit1</div>
<div style="position:absolute;left:2px;top:568px;width:43px;height:21px;background:#f7937f"></div>
<div style="position:absolute;left:45px;top:568px;width:1351px;height:21px;background:#dee8d6"></div>
<div style="position:absolute;left:2px;top:589px;width:1394px;height:1px;background:#d2d2d2"></div>
<div style="position:absolute;left:45px;top:568px;width:1px;height:21px;background:#d2d2d2"></div>
<div style="position:absolute;left:107px;top:568px;width:1px;height:21px;background:#d2d2d2"></div>
<div style="position:absolute;left:1285px;top:568px;width:1px;height:21px;background:#d2d2d2"></div>
<div class="t" style="left:6.32px;top:574.03px;font-size:10.000px;color:#444;font-weight:400;transform:scaleX(0.9610);transform-origin:0 0;">3755</div>
<div class="t" style="left:50.31px;top:574.03px;font-size:10.000px;color:#444;font-weight:400;transform:scaleX(0.8693);transform-origin:0 0;">SR</div>
<div class="t" style="left:111.75px;top:574.03px;font-size:10.000px;color:#444;font-weight:400;transform:scaleX(0.9176);transform-origin:0 0;">ALI-09467</div>
<div style="position:absolute;left:2px;top:590px;width:43px;height:21px;background:#f6c6c5"></div>
<div style="position:absolute;left:45px;top:590px;width:1351px;height:21px;background:#f6c6c5"></div>
<div style="position:absolute;left:2px;top:611px;width:1394px;height:1px;background:#d2d2d2"></div>
<div style="position:absolute;left:45px;top:590px;width:1px;height:21px;background:#d2d2d2"></div>
<div style="position:absolute;left:107px;top:590px;width:1px;height:21px;background:#d2d2d2"></div>
<div style="position:absolute;left:1285px;top:590px;width:1px;height:21px;background:#d2d2d2"></div>
<div class="t" style="left:6.46px;top:596.03px;font-size:10.000px;color:#444;font-weight:400;transform:scaleX(0.9608);transform-origin:0 0;">4755</div>
<div class="t" style="left:50.27px;top:596.03px;font-size:10.000px;color:#444;font-weight:400;transform:scaleX(0.8695);transform-origin:0 0;">CL</div>
<div class="t" style="left:111.75px;top:596.03px;font-size:10.000px;color:#444;font-weight:400;transform:scaleX(0.9177);transform-origin:0 0;">ALI-09780</div>
<div style="position:absolute;left:2px;top:612px;width:43px;height:21px;background:#fed0a2"></div>
<div style="position:absolute;left:45px;top:612px;width:1351px;height:21px;background:#fed0a2"></div>
<div style="position:absolute;left:2px;top:633px;width:1394px;height:1px;background:#d2d2d2"></div>
<div style="position:absolute;left:45px;top:612px;width:1px;height:21px;background:#d2d2d2"></div>
<div style="position:absolute;left:107px;top:612px;width:1px;height:21px;background:#d2d2d2"></div>
<div style="position:absolute;left:1285px;top:612px;width:1px;height:21px;background:#d2d2d2"></div>
<div class="t" style="left:6.46px;top:618.03px;font-size:10.000px;color:#444;font-weight:400;transform:scaleX(0.9610);transform-origin:0 0;">4757</div>
<div class="t" style="left:50.31px;top:618.03px;font-size:10.000px;color:#444;font-weight:400;transform:scaleX(0.8698);transform-origin:0 0;">QR</div>
<div class="t" style="left:111.08px;top:618.03px;font-size:10.000px;color:#444;font-weight:400;transform:scaleX(0.9614);transform-origin:0 0;">1234</div>
<div style="position:absolute;left:2px;top:634px;width:43px;height:19px;background:#f6c6c5"></div>
<div style="position:absolute;left:45px;top:634px;width:1351px;height:19px;background:#f6c6c5"></div>
<div style="position:absolute;left:45px;top:634px;width:1px;height:19px;background:#d2d2d2"></div>
<div style="position:absolute;left:107px;top:634px;width:1px;height:19px;background:#d2d2d2"></div>
<div style="position:absolute;left:1285px;top:634px;width:1px;height:19px;background:#d2d2d2"></div>
<div class="t" style="left:6.46px;top:640.03px;font-size:10.000px;color:#444;font-weight:400;transform:scaleX(0.9609);transform-origin:0 0;">4759</div>
<div class="t" style="left:50.27px;top:640.03px;font-size:10.000px;color:#444;font-weight:400;transform:scaleX(0.8695);transform-origin:0 0;">CL</div>
<div class="t" style="left:111.32px;top:640.03px;font-size:10.000px;color:#444;font-weight:400;transform:scaleX(0.9609);transform-origin:0 0;">270291</div>
<div class="a" style="left:2px;top:653px;width:1394px;height:14px;border:1px solid #d6d2d2;border-radius:7px;background:#fff"></div>
<div class="a" style="left:3px;top:655px;width:552.5px;height:10px;border-radius:5px;background:#c7bfbf"></div>
<div class="a" style="left:1396px;top:126.5px;width:16px;height:526px;border:1px solid #d6d2d2;border-radius:7px;background:#fff"></div>
<div class="a" style="left:1397.5px;top:127px;width:12px;height:266.5px;border-radius:6px;background:linear-gradient(90deg,#c9c0bf 0,#c9c0bf 25%,#bcbcbc 45%)"></div>
<div class="t" style="left:16.39px;top:678.71px;font-size:10.621px;color:#3a3a3a;font-weight:400;transform:scaleX(0.9505);transform-origin:0 0;">Records: 41</div>
<div class="t" style="left:1323.56px;top:679.19px;font-size:10.759px;color:#3a3a3a;font-weight:400;transform:scaleX(0.9761);transform-origin:0 0;">Legend</div>
<svg style="left:1376.2px;top:676.2px" width="15.6" height="15.6" viewBox="-10 -10 20 20">
<circle r="10" fill="#3b3e47"/>
<path d="M-6.6 0 C-3.6 -5 3.6 -5 6.6 0 C3.6 5 -3.6 5 -6.6 0 Z" fill="#fff"/>
<circle r="2.3" fill="#3b3e47"/><circle r="1" fill="#888"/>
</svg>
<div style="position:absolute;left:1px;top:701px;width:1403px;height:1px;background:#dcd8d8"></div>
<svg style="left:8px;top:712px" width="36" height="14" viewBox="0 0 36 14">
<path d="M1.2 8.5 L7 2.8 L12.8 8.5" fill="none" stroke="#111" stroke-width="2.4"/>
<path d="M22.2 6.4 L28 0.9 L33.8 6.4 M22.2 12.6 L28 7.1 L33.8 12.6" fill="none" stroke="#111" stroke-width="2.4"/>
</svg>
<div class="t" style="left:50.07px;top:709.02px;font-size:12.966px;color:#111;font-weight:700;transform:scaleX(1.0172);transform-origin:0 0;">Tools assy</div>
<div style="position:absolute;left:135px;top:706px;width:1px;height:18px;background:#dcdcdc"></div>
<svg style="left:147px;top:707px" width="15" height="17" viewBox="0 0 15 17" preserveAspectRatio="none">
<rect x="0" y="0" width="15" height="17" fill="#c9cad0"/>
<g fill="#fff" opacity="0.55"><rect x="2.4" y="1.6" width="2.6" height="3.6"/><rect x="6.2" y="1.6" width="2.6" height="3.6"/><rect x="10" y="1.6" width="2.6" height="3.6"/></g>
<g fill="#fff" opacity="0.9"><rect x="2.2" y="5.9" width="10.6" height="0.9"/><rect x="2.2" y="7.9" width="10.6" height="0.9"/></g>
<path d="M8.9 11.6 L12.7 15.6 M12.7 11.6 L8.9 15.6" stroke="#fff" stroke-width="1.5"/>
</svg>
<div style="position:absolute;left:1px;top:733px;width:1403px;height:16px;background:#858387"></div>
<div class="t" style="left:17.89px;top:738.57px;font-size:10.200px;color:#d2d2d2;font-weight:400;transform:scaleX(0.9265);transform-origin:0 0;">User: DEM</div>
<div class="t" style="left:77.86px;top:738.57px;font-size:10.200px;color:#d2d2d2;font-weight:400;transform:scaleX(0.9121);transform-origin:0 0;">Permission: Full</div>
<div class="a" style="left:177px;top:102px;width:1057px;height:550px;background:#fff;border:1px solid #4a4b52;border-right:2px solid #66666b;border-bottom:2px solid #85787b;border-top:none;box-shadow:0 0 0 1px rgba(200,198,206,0.6),0 0 5px rgba(0,0,0,0.14)"></div>
<div style="position:absolute;left:177px;top:102px;width:1057px;height:36px;background:#3b3e47"></div>
<svg style="left:188px;top:112.7px" width="15" height="16.2" viewBox="0 0 16 18" preserveAspectRatio="none">
<rect x="0" y="1.8" width="13.6" height="15.2" rx="1" fill="#f6f6f6"/>
<rect x="4" y="0" width="6" height="3.2" rx="0.9" fill="#f6f6f6" stroke="#3b3e47" stroke-width="0.8"/>
<rect x="6.6" y="7.6" width="9.4" height="10.4" fill="#f6f6f6" stroke="#3b3e47" stroke-width="1"/>
<rect x="8.8" y="10.4" width="5" height="1.2" fill="#3b3e47" opacity="0.7"/><rect x="8.8" y="12.8" width="5" height="1.2" fill="#3b3e47"/>
</svg>
<div class="t" style="left:219.94px;top:113.91px;font-size:14.286px;color:#e9e9e9;font-weight:400;transform:scaleX(0.8698);transform-origin:0 0;">WORK PACKAGE TOOL LIST</div>
<div style="position:absolute;left:1153px;top:121.5px;width:8.5px;height:2.2px;background:#d8d8d8"></div>
<div class="a" style="left:1183px;top:116px;width:8.5px;height:8px;border:1px solid #d8d8d8;border-top-width:2px"></div>
<svg style="left:1213px;top:116px" width="9" height="9" viewBox="0 0 9 9">
<path d="M0.6 0.6 L8.4 8.4 M8.4 0.6 L0.6 8.4" stroke="#e0e0e0" stroke-width="1.5"/></svg>
<div class="t" style="left:192.50px;top:147.82px;font-size:12.966px;color:#333;font-weight:700;transform:scaleX(1.0557);transform-origin:0 0;">Work Packages</div>
<div style="position:absolute;left:311px;top:145px;width:1px;height:19px;background:#dcdcdc"></div>
<svg style="left:323px;top:146px" width="15" height="18" viewBox="0 0 15 17" preserveAspectRatio="none">
<rect x="0" y="0" width="15" height="17" fill="#5d5f67"/>
<g fill="#fff" opacity="0.55"><rect x="2.4" y="1.6" width="2.6" height="3.6"/><rect x="6.2" y="1.6" width="2.6" height="3.6"/><rect x="10" y="1.6" width="2.6" height="3.6"/></g>
<g fill="#fff" opacity="0.9"><rect x="2.2" y="5.9" width="10.6" height="0.9"/><rect x="2.2" y="7.9" width="10.6" height="0.9"/></g>
<path d="M8.9 11.6 L12.7 15.6 M12.7 11.6 L8.9 15.6" stroke="#fff" stroke-width="1.5"/>
</svg>
<svg style="left:357.5px;top:146px" width="20" height="18" viewBox="0 0 20 18">
<path d="M3 9.2 A7.3 7.3 0 0 1 15.9 4" fill="none" stroke="#c9cad0" stroke-width="2.3"/>
<path d="M17.6 8.4 A7.3 7.3 0 0 1 5 13.9" fill="none" stroke="#c9cad0" stroke-width="2.3"/>
<path d="M14.6 9.4 L20.8 9.4 L17.7 4.6 Z" fill="#c9cad0"/>
<path d="M-0.2 8.3 L5.9 8.3 L2.8 13 Z" fill="#c9cad0"/>
</svg>
<div style="position:absolute;left:386px;top:145px;width:1px;height:19px;background:#dcdcdc"></div>
<div class="a" style="left:388px;top:149.3px;width:11px;height:11px;border:1.3px solid #3a3a3a;border-radius:50%"></div>
<div class="t" style="left:403.02px;top:149.86px;font-size:10.207px;color:#3a3a3a;font-weight:400;transform:scaleX(0.9532);transform-origin:0 0;">Execution</div>
<div class="a" style="left:464px;top:149.3px;width:11px;height:11px;border:1.3px solid #3a3a3a;border-radius:50%"></div>
<div class="t" style="left:479.83px;top:149.86px;font-size:10.207px;color:#3a3a3a;font-weight:400;transform:scaleX(0.9394);transform-origin:0 0;">Planned</div>
<div class="a" style="left:533.7px;top:149.3px;width:11px;height:11px;border:1.3px solid #3a3a3a;border-radius:50%"></div>
<div class="t" style="left:549.27px;top:149.55px;font-size:10.571px;color:#3a3a3a;font-weight:400;transform:scaleX(0.8953);transform-origin:0 0;">Open</div>
<div style="position:absolute;left:590.5px;top:146px;width:1px;height:18px;background:#dcdcdc"></div>
<div class="t" style="left:612.74px;top:149.01px;font-size:10.621px;color:#3a3a3a;font-weight:400;transform:scaleX(0.8923);transform-origin:0 0;">From Change Date:</div>
<div class="a" style="left:703.5px;top:144px;width:132px;height:21.5px;border:1px solid #cdc7c7;border-radius:4px;background:#fff"></div>
<svg style="left:822px;top:150px" width="10" height="11" viewBox="0 0 10 11">
<rect x="0.7" y="2" width="8.6" height="8.3" fill="none" stroke="#2a6ef2" stroke-width="1.3"/>
<rect x="0.7" y="2" width="8.6" height="2.2" fill="#2a6ef2"/>
<rect x="2.2" y="0" width="1.2" height="2.2" fill="#2a6ef2"/><rect x="6.6" y="0" width="1.2" height="2.2" fill="#2a6ef2"/>
<rect x="5.2" y="6" width="2.4" height="2.4" fill="#2a6ef2"/></svg>
<div class="t" style="left:857.95px;top:148.55px;font-size:11.159px;color:#3a3a3a;font-weight:400;transform:scaleX(0.8087);transform-origin:0 0;">AcReg:</div>
<div class="a" style="left:895.5px;top:145.3px;width:96.5px;height:20px;border:1px solid #cdc7c7;border-radius:4px;background:#fff"></div>
<svg style="left:981px;top:152px" width="8" height="5" viewBox="0 0 8 5"><path d="M0.6 0.6 L4 4 L7.4 0.6" fill="none" stroke="#2a6ef2" stroke-width="1.3"/></svg>
<div style="position:absolute;left:178px;top:172px;width:1055px;height:8px;background:#b9b9b9"></div>
<svg style="left:702px;top:173.5px" width="7" height="5" viewBox="0 0 7 5"><path d="M0 0 H7 L3.5 4.5Z" fill="#2a2a2a"/></svg>
<div style="position:absolute;left:178px;top:180px;width:1055px;height:2px;background:#eae6e6"></div>
<div style="position:absolute;left:179px;top:182px;width:1040px;height:30px;background:#3b3e47"></div>
<div style="position:absolute;left:239px;top:182px;width:2px;height:30px;background:#858085"></div>
<div style="position:absolute;left:350px;top:182px;width:2px;height:30px;background:#858085"></div>
<div style="position:absolute;left:459px;top:182px;width:2px;height:30px;background:#858085"></div>
<div style="position:absolute;left:749.5px;top:182px;width:2px;height:30px;background:#858085"></div>
<div style="position:absolute;left:961px;top:182px;width:2px;height:30px;background:#858085"></div>
<div style="position:absolute;left:1071px;top:182px;width:2px;height:30px;background:#858085"></div>
<div class="t" style="left:184.70px;top:191.11px;font-size:11.448px;color:#f2f2f2;font-weight:400;transform:scaleX(0.9711);transform-origin:0 0;">ID:</div>
<div class="t" style="left:247.54px;top:191.11px;font-size:11.448px;color:#f2f2f2;font-weight:400;transform:scaleX(0.9711);transform-origin:0 0;">Work Package:</div>
<div class="t" style="left:357.74px;top:191.11px;font-size:11.448px;color:#f2f2f2;font-weight:400;transform:scaleX(0.9711);transform-origin:0 0;">Ac.Reg.:</div>
<div class="t" style="left:466.81px;top:191.11px;font-size:11.448px;color:#f2f2f2;font-weight:400;transform:scaleX(0.9711);transform-origin:0 0;">Description:</div>
<div class="t" style="left:757.61px;top:191.11px;font-size:11.448px;color:#f2f2f2;font-weight:400;transform:scaleX(0.9711);transform-origin:0 0;">Date:</div>
<div class="t" style="left:967.60px;top:191.11px;font-size:11.448px;color:#f2f2f2;font-weight:400;transform:scaleX(0.9711);transform-origin:0 0;">Issued By:</div>
<div class="t" style="left:1078.71px;top:191.11px;font-size:11.448px;color:#f2f2f2;font-weight:400;transform:scaleX(0.9711);transform-origin:0 0;">Plan Date:</div>
<div class="a" style="left:179px;top:212px;width:1040px;height:142px;overflow:hidden">
<div style="position:absolute;left:0px;top:0px;width:1040px;height:21px;background:#fff"></div>
<div style="position:absolute;left:0px;top:21px;width:1040px;height:1px;background:#dadada"></div>
<div style="position:absolute;left:60px;top:0px;width:1.3px;height:22px;background:#e0e0e0"></div>
<div style="position:absolute;left:171px;top:0px;width:1.3px;height:22px;background:#e0e0e0"></div>
<div style="position:absolute;left:280px;top:0px;width:1.3px;height:22px;background:#e0e0e0"></div>
<div style="position:absolute;left:570.5px;top:0px;width:1.3px;height:22px;background:#e0e0e0"></div>
<div style="position:absolute;left:782px;top:0px;width:1.3px;height:22px;background:#e0e0e0"></div>
<div style="position:absolute;left:892px;top:0px;width:1.3px;height:22px;background:#e0e0e0"></div>
<div class="t" style="left:4.02px;top:6.73px;font-size:10.000px;color:#444;font-weight:400;transform:scaleX(0.9609);transform-origin:0 0;">29400</div>
<div class="t" style="left:65.95px;top:6.73px;font-size:10.000px;color:#444;font-weight:400;transform:scaleX(0.9306);transform-origin:0 0;">WP240022-002</div>
<div class="t" style="left:175.77px;top:6.73px;font-size:10.000px;color:#444;font-weight:400;transform:scaleX(0.9185);transform-origin:0 0;">RA-00002</div>
<div class="t" style="left:286.06px;top:6.73px;font-size:10.000px;color:#444;font-weight:400;transform:scaleX(0.8732);transform-origin:0 0;">AEROFLOT</div>
<div class="t" style="left:576.23px;top:6.73px;font-size:10.000px;color:#444;font-weight:400;transform:scaleX(0.9385);transform-origin:0 0;">24.12.2024</div>
<div class="t" style="left:787.40px;top:6.73px;font-size:10.000px;color:#444;font-weight:400;transform:scaleX(0.8689);transform-origin:0 0;">DUN</div>
<div class="t" style="left:897.53px;top:6.73px;font-size:10.000px;color:#444;font-weight:400;transform:scaleX(0.9385);transform-origin:0 0;">25.12.2024</div>
<div style="position:absolute;left:0px;top:22px;width:1040px;height:21px;background:#ededed"></div>
<div style="position:absolute;left:0px;top:43px;width:1040px;height:1px;background:#dadada"></div>
<div style="position:absolute;left:60px;top:22px;width:1.3px;height:22px;background:#e0e0e0"></div>
<div style="position:absolute;left:171px;top:22px;width:1.3px;height:22px;background:#e0e0e0"></div>
<div style="position:absolute;left:280px;top:22px;width:1.3px;height:22px;background:#e0e0e0"></div>
<div style="position:absolute;left:570.5px;top:22px;width:1.3px;height:22px;background:#e0e0e0"></div>
<div style="position:absolute;left:782px;top:22px;width:1.3px;height:22px;background:#e0e0e0"></div>
<div style="position:absolute;left:892px;top:22px;width:1.3px;height:22px;background:#e0e0e0"></div>
<div class="t" style="left:4.02px;top:28.74px;font-size:10.000px;color:#444;font-weight:400;transform:scaleX(0.9610);transform-origin:0 0;">29396</div>
<div class="t" style="left:65.95px;top:28.74px;font-size:10.000px;color:#444;font-weight:400;transform:scaleX(0.9306);transform-origin:0 0;">WP240018-002</div>
<div class="t" style="left:175.77px;top:28.74px;font-size:10.000px;color:#444;font-weight:400;transform:scaleX(0.9185);transform-origin:0 0;">RA-00002</div>
<div class="t" style="left:285.41px;top:28.74px;font-size:10.000px;color:#444;font-weight:400;transform:scaleX(0.8628);transform-origin:0 0;">HTC. REPLACEMENT ESCAPE SLIDE - RH FWD</div>
<div class="t" style="left:576.22px;top:28.74px;font-size:10.000px;color:#444;font-weight:400;transform:scaleX(0.9529);transform-origin:0 0;">28.11.2024</div>
<div class="t" style="left:787.87px;top:28.74px;font-size:10.000px;color:#444;font-weight:400;transform:scaleX(0.9066);transform-origin:0 0;">YAK</div>
<div class="t" style="left:897.52px;top:28.74px;font-size:10.000px;color:#444;font-weight:400;transform:scaleX(0.9529);transform-origin:0 0;">29.11.2024</div>
<div style="position:absolute;left:0px;top:44px;width:1040px;height:21px;background:#fff"></div>
<div style="position:absolute;left:0px;top:65px;width:1040px;height:1px;background:#dadada"></div>
<div style="position:absolute;left:60px;top:44px;width:1.3px;height:22px;background:#e0e0e0"></div>
<div style="position:absolute;left:171px;top:44px;width:1.3px;height:22px;background:#e0e0e0"></div>
<div style="position:absolute;left:280px;top:44px;width:1.3px;height:22px;background:#e0e0e0"></div>
<div style="position:absolute;left:570.5px;top:44px;width:1.3px;height:22px;background:#e0e0e0"></div>
<div style="position:absolute;left:782px;top:44px;width:1.3px;height:22px;background:#e0e0e0"></div>
<div style="position:absolute;left:892px;top:44px;width:1.3px;height:22px;background:#e0e0e0"></div>
<div class="t" style="left:4.02px;top:50.73px;font-size:10.000px;color:#444;font-weight:400;transform:scaleX(0.9608);transform-origin:0 0;">29394</div>
<div class="t" style="left:65.95px;top:50.73px;font-size:10.000px;color:#444;font-weight:400;transform:scaleX(0.9306);transform-origin:0 0;">WP240017-002</div>
<div class="t" style="left:175.77px;top:50.73px;font-size:10.000px;color:#444;font-weight:400;transform:scaleX(0.9185);transform-origin:0 0;">RA-00002</div>
<div class="t" style="left:286.06px;top:50.73px;font-size:10.000px;color:#444;font-weight:400;transform:scaleX(0.8713);transform-origin:0 0;">ALASKAR TEST</div>
<div class="t" style="left:576.22px;top:50.73px;font-size:10.000px;color:#444;font-weight:400;transform:scaleX(0.9529);transform-origin:0 0;">26.11.2024</div>
<div class="t" style="left:787.40px;top:50.73px;font-size:10.000px;color:#444;font-weight:400;transform:scaleX(0.8689);transform-origin:0 0;">DUN</div>
<div class="t" style="left:897.52px;top:50.73px;font-size:10.000px;color:#444;font-weight:400;transform:scaleX(0.9529);transform-origin:0 0;">27.11.2024</div>
<div style="position:absolute;left:0px;top:66px;width:1040px;height:21px;background:#ededed"></div>
<div style="position:absolute;left:0px;top:87px;width:1040px;height:1px;background:#dadada"></div>
<div style="position:absolute;left:60px;top:66px;width:1.3px;height:22px;background:#e0e0e0"></div>
<div style="position:absolute;left:171px;top:66px;width:1.3px;height:22px;background:#e0e0e0"></div>
<div style="position:absolute;left:280px;top:66px;width:1.3px;height:22px;background:#e0e0e0"></div>
<div style="position:absolute;left:570.5px;top:66px;width:1.3px;height:22px;background:#e0e0e0"></div>
<div style="position:absolute;left:782px;top:66px;width:1.3px;height:22px;background:#e0e0e0"></div>
<div style="position:absolute;left:892px;top:66px;width:1.3px;height:22px;background:#e0e0e0"></div>
<div class="t" style="left:4.02px;top:72.73px;font-size:10.000px;color:#444;font-weight:400;transform:scaleX(0.9610);transform-origin:0 0;">29393</div>
<div class="t" style="left:65.95px;top:72.73px;font-size:10.000px;color:#444;font-weight:400;transform:scaleX(0.9306);transform-origin:0 0;">WP240016-004</div>
<div class="t" style="left:175.77px;top:72.73px;font-size:10.000px;color:#444;font-weight:400;transform:scaleX(0.9186);transform-origin:0 0;">RA-00004</div>
<div class="t" style="left:286.06px;top:72.73px;font-size:10.000px;color:#444;font-weight:400;transform:scaleX(0.8706);transform-origin:0 0;">ALASKAR MAINTENACE</div>
<div class="t" style="left:576.22px;top:72.73px;font-size:10.000px;color:#444;font-weight:400;transform:scaleX(0.9529);transform-origin:0 0;">26.11.2024</div>
<div class="t" style="left:787.40px;top:72.73px;font-size:10.000px;color:#444;font-weight:400;transform:scaleX(0.8689);transform-origin:0 0;">DUN</div>
<div class="t" style="left:897.52px;top:72.73px;font-size:10.000px;color:#444;font-weight:400;transform:scaleX(0.9529);transform-origin:0 0;">27.11.2024</div>
<div style="position:absolute;left:0px;top:88px;width:1040px;height:21px;background:#fff"></div>
<div style="position:absolute;left:0px;top:109px;width:1040px;height:1px;background:#dadada"></div>
<div style="position:absolute;left:60px;top:88px;width:1.3px;height:22px;background:#e0e0e0"></div>
<div style="position:absolute;left:171px;top:88px;width:1.3px;height:22px;background:#e0e0e0"></div>
<div style="position:absolute;left:280px;top:88px;width:1.3px;height:22px;background:#e0e0e0"></div>
<div style="position:absolute;left:570.5px;top:88px;width:1.3px;height:22px;background:#e0e0e0"></div>
<div style="position:absolute;left:782px;top:88px;width:1.3px;height:22px;background:#e0e0e0"></div>
<div style="position:absolute;left:892px;top:88px;width:1.3px;height:22px;background:#e0e0e0"></div>
<div class="t" style="left:4.02px;top:94.73px;font-size:10.000px;color:#444;font-weight:400;transform:scaleX(0.9611);transform-origin:0 0;">29392</div>
<div class="t" style="left:65.95px;top:94.73px;font-size:10.000px;color:#444;font-weight:400;transform:scaleX(0.9306);transform-origin:0 0;">WP240015-002</div>
<div class="t" style="left:175.77px;top:94.73px;font-size:10.000px;color:#444;font-weight:400;transform:scaleX(0.9185);transform-origin:0 0;">RA-00002</div>
<div class="t" style="left:285.88px;top:94.73px;font-size:10.000px;color:#444;font-weight:400;transform:scaleX(0.8724);transform-origin:0 0;">TEST</div>
<div class="t" style="left:576.22px;top:94.73px;font-size:10.000px;color:#444;font-weight:400;transform:scaleX(0.9529);transform-origin:0 0;">26.11.2024</div>
<div class="t" style="left:787.40px;top:94.73px;font-size:10.000px;color:#444;font-weight:400;transform:scaleX(0.8689);transform-origin:0 0;">DUN</div>
<div class="t" style="left:897.52px;top:94.73px;font-size:10.000px;color:#444;font-weight:400;transform:scaleX(0.9529);transform-origin:0 0;">27.11.2024</div>
<div style="position:absolute;left:0px;top:110px;width:1040px;height:21px;background:#ededed"></div>
<div style="position:absolute;left:0px;top:131px;width:1040px;height:1px;background:#dadada"></div>
<div style="position:absolute;left:60px;top:110px;width:1.3px;height:22px;background:#e0e0e0"></div>
<div style="position:absolute;left:171px;top:110px;width:1.3px;height:22px;background:#e0e0e0"></div>
<div style="position:absolute;left:280px;top:110px;width:1.3px;height:22px;background:#e0e0e0"></div>
<div style="position:absolute;left:570.5px;top:110px;width:1.3px;height:22px;background:#e0e0e0"></div>
<div style="position:absolute;left:782px;top:110px;width:1.3px;height:22px;background:#e0e0e0"></div>
<div style="position:absolute;left:892px;top:110px;width:1.3px;height:22px;background:#e0e0e0"></div>
<div class="t" style="left:4.02px;top:116.73px;font-size:10.000px;color:#444;font-weight:400;transform:scaleX(0.9611);transform-origin:0 0;">28391</div>
<div class="t" style="left:65.95px;top:116.73px;font-size:10.000px;color:#444;font-weight:400;transform:scaleX(0.9406);transform-origin:0 0;">WP2400037777</div>
<div class="t" style="left:175.77px;top:116.73px;font-size:10.000px;color:#444;font-weight:400;transform:scaleX(0.9185);transform-origin:0 0;">RA-77777</div>
<div class="t" style="left:285.46px;top:116.73px;font-size:10.000px;color:#444;font-weight:400;transform:scaleX(0.9887);transform-origin:0 0;">new</div>
<div class="t" style="left:576.23px;top:116.73px;font-size:10.000px;color:#444;font-weight:400;transform:scaleX(0.9385);transform-origin:0 0;">25.07.2024</div>
<div class="t" style="left:787.40px;top:116.73px;font-size:10.000px;color:#444;font-weight:400;transform:scaleX(0.8689);transform-origin:0 0;">DUN</div>
<div class="t" style="left:897.53px;top:116.73px;font-size:10.000px;color:#444;font-weight:400;transform:scaleX(0.9385);transform-origin:0 0;">26.07.2024</div>
<div style="position:absolute;left:0px;top:132px;width:1040px;height:21px;background:#fff"></div>
<div style="position:absolute;left:0px;top:153px;width:1040px;height:1px;background:#dadada"></div>
<div style="position:absolute;left:60px;top:132px;width:1.3px;height:22px;background:#e0e0e0"></div>
<div style="position:absolute;left:171px;top:132px;width:1.3px;height:22px;background:#e0e0e0"></div>
<div style="position:absolute;left:280px;top:132px;width:1.3px;height:22px;background:#e0e0e0"></div>
<div style="position:absolute;left:570.5px;top:132px;width:1.3px;height:22px;background:#e0e0e0"></div>
<div style="position:absolute;left:782px;top:132px;width:1.3px;height:22px;background:#e0e0e0"></div>
<div style="position:absolute;left:892px;top:132px;width:1.3px;height:22px;background:#e0e0e0"></div>
<div class="t" style="left:4.02px;top:138.73px;font-size:10.000px;color:#444;font-weight:400;transform:scaleX(0.9609);transform-origin:0 0;">28390</div>
<div class="t" style="left:65.95px;top:138.73px;font-size:10.000px;color:#444;font-weight:400;transform:scaleX(0.9406);transform-origin:0 0;">WP2400037777</div>
<div class="t" style="left:175.77px;top:138.73px;font-size:10.000px;color:#444;font-weight:400;transform:scaleX(0.9185);transform-origin:0 0;">RA-77777</div>
<div class="t" style="left:285.33px;top:138.73px;font-size:10.000px;color:#444;font-weight:400;transform:scaleX(0.9591);transform-origin:0 0;">Daily check</div>
<div class="t" style="left:576.23px;top:138.73px;font-size:10.000px;color:#444;font-weight:400;transform:scaleX(0.9385);transform-origin:0 0;">24.07.2024</div>
<div class="t" style="left:787.40px;top:138.73px;font-size:10.000px;color:#444;font-weight:400;transform:scaleX(0.8689);transform-origin:0 0;">DUN</div>
<div class="t" style="left:897.53px;top:138.73px;font-size:10.000px;color:#444;font-weight:400;transform:scaleX(0.9385);transform-origin:0 0;">25.07.2024</div>
</div>
<div class="a" style="left:1219px;top:182px;width:13px;height:171.5px;border:1px solid #d8d4d4;border-radius:6px;background:#fff"></div>
<div class="a" style="left:1220.5px;top:182.5px;width:11px;height:11px;border-radius:50%;background:#c9c1c1"></div>
<div class="a" style="left:179px;top:354px;width:1040px;height:14px;border:1px solid #d6d2d2;border-radius:7px;background:#fff"></div>
<div class="a" style="left:180px;top:355.5px;width:520px;height:11px;border-radius:5.5px;background:#c7bfbf"></div>
<div class="t" style="left:193.39px;top:375.71px;font-size:10.621px;color:#3a3a3a;font-weight:400;transform:scaleX(0.9513);transform-origin:0 0;">Records: 103</div>
<div style="position:absolute;left:178px;top:394px;width:1055px;height:1.5px;background:#dcd8d8"></div>
<div class="t" style="left:199.29px;top:404.96px;font-size:12.690px;color:#333;font-weight:700;transform:scaleX(1.1059);transform-origin:0 0;">Instrument Requirements:</div>
<div style="position:absolute;left:391px;top:401px;width:1px;height:19px;background:#dcdcdc"></div>
<svg style="left:403px;top:402.5px" width="15" height="17" viewBox="0 0 15 17" preserveAspectRatio="none">
<rect x="0" y="0" width="15" height="17" fill="#c9cad0"/>
<g fill="#fff" opacity="0.55"><rect x="2.4" y="1.6" width="2.6" height="3.6"/><rect x="6.2" y="1.6" width="2.6" height="3.6"/><rect x="10" y="1.6" width="2.6" height="3.6"/></g>
<g fill="#fff" opacity="0.9"><rect x="2.2" y="5.9" width="10.6" height="0.9"/><rect x="2.2" y="7.9" width="10.6" height="0.9"/></g>
<path d="M8.9 11.6 L12.7 15.6 M12.7 11.6 L8.9 15.6" stroke="#fff" stroke-width="1.5"/>
</svg>
<div style="position:absolute;left:178px;top:427px;width:1055px;height:30px;background:#3b3e47"></div>
<div style="position:absolute;left:288px;top:427px;width:1.5px;height:30px;background:#7d7f84"></div>
<div style="position:absolute;left:578.5px;top:427px;width:1.5px;height:30px;background:#7d7f84"></div>
<div style="position:absolute;left:689px;top:427px;width:1.5px;height:30px;background:#7d7f84"></div>
<div style="position:absolute;left:799px;top:427px;width:1.5px;height:30px;background:#7d7f84"></div>
<div style="position:absolute;left:909px;top:427px;width:1.5px;height:30px;background:#7d7f84"></div>
<div style="position:absolute;left:1019px;top:427px;width:1.5px;height:30px;background:#7d7f84"></div>
<div style="position:absolute;left:1129.5px;top:427px;width:1.5px;height:30px;background:#7d7f84"></div>
<div class="t" style="left:185.74px;top:436.11px;font-size:11.448px;color:#f2f2f2;font-weight:400;transform:scaleX(0.9711);transform-origin:0 0;">Aircraft:</div>
<div class="t" style="left:294.91px;top:436.11px;font-size:11.448px;color:#f2f2f2;font-weight:400;transform:scaleX(0.9711);transform-origin:0 0;">Description:</div>
<div class="t" style="left:585.80px;top:436.11px;font-size:11.448px;color:#f2f2f2;font-weight:400;transform:scaleX(0.9711);transform-origin:0 0;">OEM PN:</div>
<div class="t" style="left:696.30px;top:436.11px;font-size:11.448px;color:#f2f2f2;font-weight:400;transform:scaleX(0.9711);transform-origin:0 0;">Supplier PN:</div>
<div class="t" style="left:806.30px;top:436.11px;font-size:11.448px;color:#f2f2f2;font-weight:400;transform:scaleX(0.9711);transform-origin:0 0;">Optional PN:</div>
<div class="t" style="left:915.91px;top:436.11px;font-size:11.448px;color:#f2f2f2;font-weight:400;transform:scaleX(0.9711);transform-origin:0 0;">Remarks:</div>
<div class="t" style="left:1026.52px;top:436.11px;font-size:11.448px;color:#f2f2f2;font-weight:400;transform:scaleX(0.9711);transform-origin:0 0;">Task:</div>
<div class="t" style="left:1137.02px;top:436.11px;font-size:11.448px;color:#f2f2f2;font-weight:400;transform:scaleX(0.9711);transform-origin:0 0;">Task Title:</div>
<div class="t" style="left:659.40px;top:527.87px;font-size:20.000px;color:#555;font-weight:700;transform:scaleX(1.0802);transform-origin:0 0;">No Items</div>
<div class="t" style="left:193.39px;top:626.01px;font-size:10.621px;color:#3a3a3a;font-weight:400;transform:scaleX(0.9545);transform-origin:0 0;">Records: 0</div>
<div class="t" style="left:1143.17px;top:624.43px;font-size:11.310px;color:#3a3a3a;font-weight:400;transform:scaleX(0.9146);transform-origin:0 0;">Legend</div>
<svg style="left:1196.0px;top:621.8px" width="19.0" height="19.0" viewBox="-10 -10 20 20">
<circle r="10" fill="#3b3e47"/>
<path d="M-6.6 0 C-3.6 -5 3.6 -5 6.6 0 C3.6 5 -3.6 5 -6.6 0 Z" fill="#fff"/>
<circle r="2.3" fill="#3b3e47"/><circle r="1" fill="#888"/>
</svg>
<svg style="left:0;top:0" width="1404" height="749" viewBox="0 0 1404 749">
<path d="M484 268 L576 356 L545 381 Z" fill="#0e9bf7"/>
<circle cx="569" cy="380" r="22.5" fill="#0e9bf7" stroke="#fff" stroke-width="1.5"/>
<circle cx="569" cy="380" r="23.2" fill="none" stroke="#1a1a1a" stroke-width="1.3"/>
<text x="569.2" y="388.8" font-family="Liberation Sans" font-weight="700" font-size="22.5" fill="#fff" text-anchor="middle">4</text>
</svg>
</body></html>
